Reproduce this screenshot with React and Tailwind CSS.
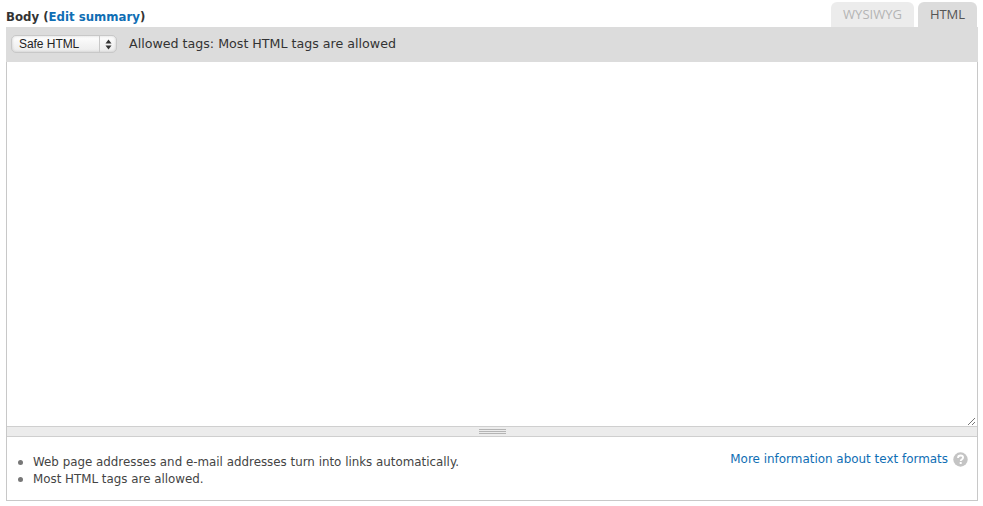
import React from 'react';

function HelpIcon() {
  return (
    <svg width="15" height="15" viewBox="0 0 15 15" className="shrink-0 mt-[-1px]">
      <circle cx="7.5" cy="7.5" r="7.2" fill="#c4c4c4" />
      <path d="M5 5.9c0-1.5 1.1-2.4 2.6-2.4s2.5.9 2.5 2.1c0 2-2.4 1.9-2.4 3.5" fill="none" stroke="#fff" strokeWidth="1.8" />
      <rect x="6.7" y="10" width="2" height="2" fill="#fff" />
    </svg>
  );
}

function SelectArrows() {
  return (
    <svg width="7" height="11" viewBox="0 0 7 11">
      <path d="M3.5 0.5L6.5 4.5H0.5Z M3.5 10.5L0.5 6.5H6.5Z" fill="#333" />
    </svg>
  );
}

function Bullet({ children }) {
  return (
    <li className="flex items-center">
      <span className="w-[5px] h-[5px] rounded-full bg-[#777] mr-[10px]" />
      {children}
    </li>
  );
}

export default function App() {
  return (
    <div className="w-[983px] h-[506px] bg-white pl-[6px] pr-[5px] font-['DejaVu_Sans',sans-serif] overflow-hidden">
      <div className="flex justify-between h-[27px]">
        <div className="pt-[10px] text-[11.75px] leading-[15px] font-bold text-[#333]">
          Body (<a className="text-[#0f6eb4]">Edit summary</a>)
        </div>
        <div className="flex items-end gap-[4px] pt-[2px] pr-[1px]">
          <div className="w-[83px] h-[25px] rounded-t-[6px] bg-[#ececec] text-[#b4b4b4] text-[13px] font-medium flex items-center justify-center font-['Open_Sans',sans-serif]">WYSIWYG</div>
          <div className="w-[59px] h-[25px] rounded-t-[6px] bg-[#dcdcdc] text-[#555] text-[13px] font-medium flex items-center justify-center font-['Open_Sans',sans-serif]">HTML</div>
        </div>
      </div>
      <div className="h-[35px] bg-[#dcdcdc] flex items-center pl-[5px] pb-[1px]">
        <div className="w-[106px] h-[18px] rounded-[5px] border border-[#c8c8c8] bg-gradient-to-b from-white via-[#f4f4f4] to-[#ececec] shadow-[inset_0_0_3px_rgba(0,0,0,0.18)] flex items-center text-[12px] text-[#222] font-['Liberation_Sans',sans-serif]">
          <span className="flex-1 pl-[7px] pb-[1px] tracking-[-0.05px]">Safe HTML</span>
          <span className="w-[17px] h-full border-l border-[#c8c8c8] flex items-center justify-center">
            <SelectArrows />
          </span>
        </div>
        <span className="ml-[12px] pt-[1px] text-[12.65px] text-[#333]">Allowed tags: Most HTML tags are allowed</span>
      </div>
      <div className="border-x border-[#c8c8c8]">
        <div className="relative h-[364px] bg-white">
          <svg width="9" height="9" viewBox="0 0 9 9" className="absolute right-[1px] bottom-0">
            <path d="M1 8L8 1M5 8L8 5" stroke="#777" strokeWidth="1" />
          </svg>
        </div>
        <div className="h-[11px] bg-[#ececec] border-y border-[#cfcfcf] flex items-center justify-center">
          <div className="w-[27px] h-[5px] border-y border-[#b4b4b4] flex items-center">
            <div className="w-full h-[1px] bg-[#b4b4b4]" />
          </div>
        </div>
        <div className="h-[64px] border-b border-[#c8c8c8] flex justify-between pl-[11px] pr-[9px] pt-[16px] text-[#444]">
          <ul className="text-[11.86px] leading-[17px] pt-[1px]">
            <Bullet>Web page addresses and e-mail addresses turn into links automatically.</Bullet>
            <Bullet>Most HTML tags are allowed.</Bullet>
          </ul>
          <div className="flex items-start gap-[5px] text-[11.95px]">
            <a className="text-[#0f6eb4] leading-[14px] mt-[-1px]">More information about text formats</a>
            <HelpIcon />
          </div>
        </div>
      </div>
    </div>
  );
}
